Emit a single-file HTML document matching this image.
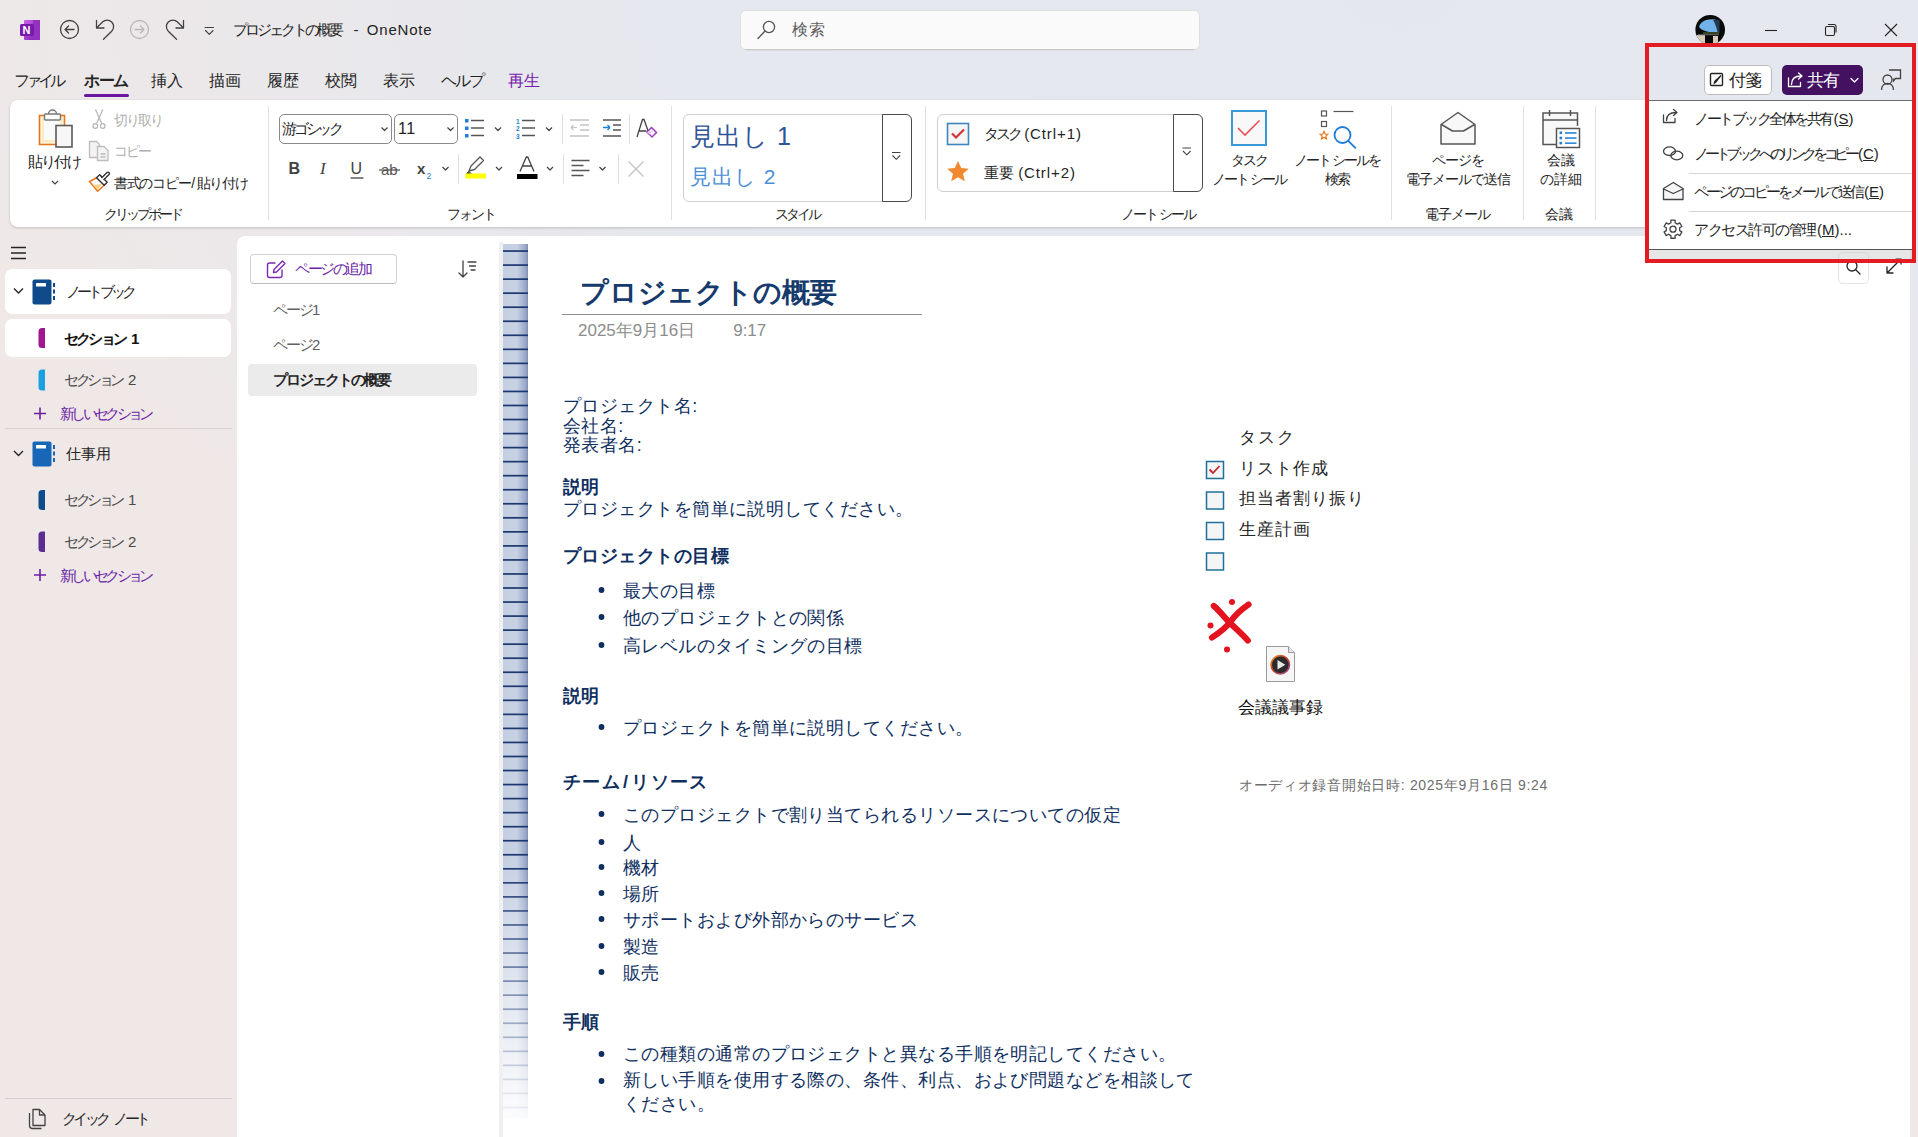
<!DOCTYPE html>
<html><head><meta charset="utf-8">
<style>
*{box-sizing:border-box;margin:0;padding:0}
html,body{width:1918px;height:1137px;overflow:hidden}
body{font-family:"Liberation Sans",sans-serif;position:relative;background:radial-gradient(ellipse 1500px 760px at 1400px 0px,#e4e8ee 0%,#e5e8ee 50%,rgba(232,232,236,.6) 78%,rgba(239,232,231,0) 100%),#efe8e7;color:#242424}
.a{position:absolute;white-space:nowrap}
svg{position:absolute;overflow:visible}
/* ribbon */
#ribbon{position:absolute;left:10px;top:100px;width:1660px;height:127px;background:#fff;border-radius:8px;box-shadow:0 1px 3px rgba(0,0,0,.18)}
.vsep{position:absolute;width:1px;background:#e1dfdd}
.glabel{position:absolute;font-size:14px;color:#3b3b3b;top:205px;transform:translateX(-50%)}
/* nav */
#nav{position:absolute;left:0;top:236px;width:237px;height:901px}
.card{position:absolute;left:5px;width:226px;background:#fff;border-radius:7px}
#pages{position:absolute;left:237px;top:236px;width:263px;height:901px;background:#fff;border-top-left-radius:8px}
#page{position:absolute;left:500px;top:236px;width:1410px;height:901px;background:#fff}
.t{color:#1c3160}
</style></head><body>


<!-- TITLE BAR -->
<svg style="left:0;top:0" width="1918" height="100">
 <!-- onenote logo -->
 <defs><linearGradient id="onb" x1="0" y1="0" x2="1" y2="1"><stop offset="0" stop-color="#ca64ea"/><stop offset="1" stop-color="#7719aa"/></linearGradient></defs>
 <rect x="24" y="20" width="16" height="20" rx="1" fill="url(#onb)"/>
 <rect x="33" y="20" width="7" height="20" fill="#9332bf"/>
 <rect x="20" y="24" width="14" height="12" rx="1.5" fill="#7719aa"/>
 <text x="22.5" y="34" font-family="Liberation Sans" font-weight="bold" font-size="11" fill="#fff">N</text>
 <!-- back -->
 <g fill="none" stroke="#424242" stroke-width="1.3" stroke-linecap="round" stroke-linejoin="round">
  <circle cx="69.5" cy="29.5" r="9"/>
  <path d="M65 29.5h9M65 29.5l3.5-3.5M65 29.5l3.5 3.5"/>
  <path d="M96.5 20.5v7.5h7.5M97 27.5L102.5 22A6.5 6.5 0 0 1 111.7 31.2L103.5 39.2"/>
 </g>
 <g fill="none" stroke="#b8b8b8" stroke-width="1.3" stroke-linecap="round" stroke-linejoin="round">
  <circle cx="139.5" cy="29.5" r="9"/>
  <path d="M144 29.5h-9M144 29.5l-3.5-3.5M144 29.5l-3.5 3.5"/>
 </g>
 <g fill="none" stroke="#424242" stroke-width="1.3" stroke-linecap="round" stroke-linejoin="round">
  <path d="M183.5 20.5v7.5h-7.5M183 27.5L177.5 22A6.5 6.5 0 0 0 168.3 31.2L176.5 39.2"/>
 </g>
 <g fill="none" stroke="#424242" stroke-width="1.1" stroke-linecap="round" stroke-linejoin="round">
  <path d="M205 27.5h8.5M205.5 30.5l3.8 3.8 3.8-3.8"/>
 </g>
 <!-- search box -->
 <rect x="740.5" y="10.5" width="459" height="39" rx="5" fill="#fafafa" stroke="#dedede"/>
 <line x1="745" y1="49.5" x2="1195" y2="49.5" stroke="#c8c8c8"/><line x1="747" y1="50.5" x2="1193" y2="50.5" stroke="#dcdde2"/>
 <g fill="none" stroke="#555" stroke-width="1.3" stroke-linecap="round">
  <circle cx="769" cy="27" r="5.6"/><path d="M765 31l-7 7.5"/>
 </g>
 <!-- avatar -->
 <defs><clipPath id="avc"><circle cx="1710.2" cy="29.7" r="14.8"/></clipPath></defs>
 <g clip-path="url(#avc)">
  <rect x="1695" y="14" width="31" height="31" fill="#0a0a0a"/>
  <path d="M1699 27c1-4 4-6 7-7 4-1 8-1 11 0l1 12h-9c-4-1-8-2-10-5z" fill="#6fb3ea"/>
  <path d="M1713 20c2 3 3 6 4 10l1 3h1.5v-13z" fill="#243a52"/>
  <path d="M1703 32h16v2h-16z" fill="#4a5a2a" opacity=".7"/>
  <path d="M1697 35h8v9h-8zM1713 36h5v8h-5z" fill="#d8ccb8"/>
  <path d="M1698 34h21v1.2h-21z" fill="#555"/>
 </g>
 <!-- window controls -->
 <g fill="none" stroke="#242424" stroke-width="1.1">
  <path d="M1765 30.5h12"/>
  <rect x="1825.5" y="26.5" width="9" height="9" rx="1.5"/>
  <path d="M1828 24.5h6a2 2 0 0 1 2 2v6"/>
  <path d="M1885 24l12 12M1897 24l-12 12"/>
 </g>
 <!-- active tab underline -->
 <rect x="84" y="94" width="45" height="3" rx="1.5" fill="#6b17a0"/>
</svg>
<div class="a" style="left:233px;top:20px;font-size:15px;line-height:20px;color:#242424"><span style="letter-spacing:-3px">プロジェクトの概要</span>&nbsp;&nbsp; - &nbsp;<span style="letter-spacing:0.8px">OneNote</span></div>
<div class="a tabs" style="top:70px;font-size:16px;line-height:22px;color:#242424">
 <span style="position:absolute;left:14px;letter-spacing:-4px">ファイル</span>
 <span style="position:absolute;left:84px;font-weight:bold;letter-spacing:-1.5px">ホーム</span>
 <span style="position:absolute;left:151px">挿入</span>
 <span style="position:absolute;left:209px">描画</span>
 <span style="position:absolute;left:267px">履歴</span>
 <span style="position:absolute;left:325px">校閲</span>
 <span style="position:absolute;left:383px">表示</span>
 <span style="position:absolute;left:441px;letter-spacing:-2px">ヘルプ</span>
 <span style="position:absolute;left:508px;color:#7719aa">再生</span>
</div>
<div class="a" style="left:792px;top:19px;font-size:16px;line-height:22px;color:#5e5e5e;letter-spacing:0.5px">検索</div>


<!-- RIBBON -->
<div id="ribbon"></div>
<svg style="left:0;top:0" width="1918" height="240">
 <!-- separators -->
 <g stroke="#e0e0e0" stroke-width="1">
  <path d="M268.5 106v114M671.5 106v114M925.5 106v114M1391.5 106v114M1523.5 106v114M1595.5 106v114"/>
  <path d="M562.5 114v30M629.5 114v30M458.5 154v30M563.5 154v30M618.5 154v30"/>
 </g>
 <!-- paste -->
 <rect x="39.5" y="115.5" width="25" height="29" fill="#fff6e0" stroke="#e8761c" stroke-width="1.6"/><rect x="42" y="118" width="20" height="24" fill="#fde2a8" opacity=".6"/><rect x="44" y="120" width="16" height="20" fill="#fafafa"/>
 <rect x="44.5" y="114" width="16" height="6" rx="1" fill="#fff" stroke="#7a7a7a" stroke-width="1.5"/>
 <path d="M48.5 114a4 4 0 0 1 8 0" fill="none" stroke="#7a7a7a" stroke-width="1.5"/>
 <rect x="56" y="125.5" width="16" height="21.5" fill="#f6f6f6" stroke="#5a5a5a" stroke-width="1.6"/>
 <path d="M52 181l3 3 3-3" fill="none" stroke="#424242" stroke-width="1.2"/>
 <!-- scissors -->
 <g fill="none" stroke="#b4b4b4" stroke-width="1.2">
  <path d="M95.5 109.5l6 13.5M102.8 109.5l-6 13.5"/>
  <circle cx="95.3" cy="126" r="2.3"/><circle cx="102.7" cy="126" r="2.3"/>
 </g>
 <!-- copy -->
 <g fill="#f3f3f3" stroke="#bcbcbc" stroke-width="1.3">
  <path d="M89.5 141.5h7l3 3v13h-10z"/>
  <path d="M97.5 146.5h6.5l4 4v10h-10.5z"/>
  <path d="M100.5 154h5M100.5 157h5" fill="none"/>
 </g>
 <!-- format painter -->
 <path d="M89.5 181.5l7.5-4 7.5 7.5-6.8 6.3z" fill="#fafafa" stroke="#e8761c" stroke-width="1.5" stroke-linejoin="round"/>
 <path d="M93 185l9-1-4.3 6z" fill="#fbd38a"/>
 <path d="M96.5 177.8l3.2-3 7.5 7.5-3 3z" fill="#fff" stroke="#303030" stroke-width="1.4" stroke-linejoin="round"/>
 <path d="M101.5 178l5.5-5.5a1.3 1.3 0 0 1 2 2l-5.5 5.5" fill="#fff" stroke="#303030" stroke-width="1.4" stroke-linejoin="round"/>
 <!-- font boxes -->
 <rect x="279.5" y="114.5" width="112" height="29" rx="4.5" fill="#fff" stroke="#8a8a8a"/>
 <rect x="394.5" y="114.5" width="63" height="29" rx="4.5" fill="#fff" stroke="#8a8a8a"/>
 <g fill="none" stroke="#424242" stroke-width="1.2" stroke-linejoin="round">
  <path d="M381.5 127.5l3 3 3-3M447.5 127.5l3 3 3-3M495 127.5l3 3 3-3M546 127.5l3 3 3-3"/>
  <path d="M442.5 167l3 3 3-3M496 167l3 3 3-3M547 167l3 3 3-3M599.5 167l3 3 3-3"/>
 </g>
 <!-- bullets -->
 <g fill="#1c7ed6"><rect x="465" y="119" width="3.5" height="3.5"/><rect x="465" y="126.5" width="3.5" height="3.5"/><rect x="465" y="134" width="3.5" height="3.5"/></g>
 <path d="M471 120.5h13M471 128h13M471 135.5h13M522 120.5h13M522 128h13M522 135.5h13" stroke="#555" stroke-width="1.4"/>
 <g fill="#1c7ed6" font-family="Liberation Sans" font-size="6.5" font-weight="bold"><text x="516" y="124">1</text><text x="516" y="131">2</text><text x="516" y="138.5">3</text></g>
 <!-- indents -->
 <path d="M570 120h19M580 125h9M580 130h9M570 136h19" stroke="#c4c4c4" stroke-width="1.4"/>
 <path d="M571 127.5h6M571 127.5l2.5-2.5M571 127.5l2.5 2.5" stroke="#c4c4c4" stroke-width="1.2" fill="none"/>
 <path d="M603 120h18M613 125h8M613 130h8M603 136h18" stroke="#555" stroke-width="1.4"/>
 <path d="M603 127.5h7M610 127.5l-2.5-2.5M610 127.5l-2.5 2.5" stroke="#1c7ed6" stroke-width="1.3" fill="none"/>
 <!-- clear formatting -->
 <path d="M637 137l5.5-17.5h1.5l5 14M639.5 131h7" fill="none" stroke="#424242" stroke-width="1.3"/>
 <path d="M647 132l4.5-4.5 5 5-4.5 4.5z" fill="#fff" stroke="#9b3fbf" stroke-width="1.5"/>
 <path d="M647 132l2.5 2.5 4.5-4.5" fill="#e9c8f5"/>
 <!-- B I U ab x2 -->
 <text x="288.5" y="174" font-family="Liberation Sans" font-weight="bold" font-size="16" fill="#424242">B</text>
 <text x="320" y="174" font-family="Liberation Serif" font-style="italic" font-size="17" fill="#424242">I</text>
 <text x="350.5" y="174" font-family="Liberation Sans" font-size="16" fill="#424242">U</text>
 <path d="M350.5 178h13" stroke="#424242" stroke-width="1.3"/>
 <text x="381" y="175" font-family="Liberation Sans" font-size="15" fill="#555">ab</text>
 <path d="M379 170h21" stroke="#555" stroke-width="1.3"/>
 <text x="417" y="174" font-family="Liberation Sans" font-weight="bold" font-size="15" fill="#424242">x</text>
 <text x="426.5" y="179" font-family="Liberation Sans" font-size="8.5" fill="#1c7ed6">2</text>
 <!-- highlighter -->
 <path d="M469 171l2-5 9-9 3.5 3.5-9 9z" fill="#fff" stroke="#555" stroke-width="1.3" stroke-linejoin="round"/>
 <path d="M469 171l-2.5 2.5h5" fill="#555" stroke="#555"/>
 <rect x="465.5" y="173.5" width="20.5" height="5" fill="#ffff00"/>
 <!-- font color -->
 <path d="M520 171.5l6.3-14.5h1.4l6.3 14.5M522.5 166h9" fill="none" stroke="#424242" stroke-width="1.3"/>
 <rect x="517" y="174" width="20.5" height="5" fill="#000"/>
 <!-- align -->
 <path d="M571.5 160.5h18M571.5 165.5h12M571.5 170.5h18M571.5 175.5h12" stroke="#555" stroke-width="1.4"/>
 <!-- X -->
 <path d="M628.5 161.5l15 15M643.5 161.5l-15 15" stroke="#c4c4c4" stroke-width="1.4"/>
 <!-- styles gallery -->
 <rect x="683.5" y="114.5" width="228" height="87" rx="5.5" fill="#fff" stroke="#cfcfcf"/>
 <path d="M882.5 114.5h23.5a5.5 5.5 0 0 1 5.5 5.5v76a5.5 5.5 0 0 1-5.5 5.5h-23.5z" fill="#fff" stroke="#4a4a4a"/>
 <path d="M892 152.5h8.5M892.5 155.5l3.8 3.8 3.8-3.8" fill="none" stroke="#424242" stroke-width="1.1"/>
 <!-- tags gallery -->
 <rect x="937.5" y="114.5" width="265" height="77" rx="5.5" fill="#fff" stroke="#cfcfcf"/>
 <path d="M1173.5 114.5h23.5a5.5 5.5 0 0 1 5.5 5.5v66a5.5 5.5 0 0 1-5.5 5.5h-23.5z" fill="#fff" stroke="#4a4a4a"/>
 <path d="M1182.5 148h8.5M1183 151l3.8 3.8 3.8-3.8" fill="none" stroke="#424242" stroke-width="1.1"/>
 <rect x="947.5" y="123.5" width="21" height="21" fill="#f5f5f5" stroke="#3e86c0" stroke-width="1.6"/>
 <path d="M952 133.5l4 4 8-8" fill="none" stroke="#d13438" stroke-width="2.2"/>
 <path d="M958 161l3.2 7 7.6.7-5.8 5 1.8 7.5-6.8-4-6.8 4 1.8-7.5-5.8-5 7.6-.7z" fill="#f0892e"/>
 <!-- big task -->
 <rect x="1232" y="111" width="34" height="34" fill="#f8f8f8" stroke="#3a9ad9" stroke-width="2"/>
 <path d="M1238 128l7 7 14.5-14.5" fill="none" stroke="#e8505b" stroke-width="1.6"/>
 <!-- find tags -->
 <g fill="none" stroke="#555" stroke-width="1.2">
  <rect x="1321.5" y="111" width="5" height="5"/><rect x="1321.5" y="121.5" width="5" height="5"/>
  <path d="M1333.5 111.5h20"/>
 </g>
 <path d="M1324 131.5l1.2 2.5 2.7.3-2 1.8.6 2.7-2.5-1.4-2.5 1.4.6-2.7-2-1.8 2.7-.3z" fill="none" stroke="#e8761c" stroke-width="1.2"/>
 <circle cx="1342.5" cy="135" r="8" fill="none" stroke="#1c7ed6" stroke-width="1.8"/>
 <path d="M1348.3 140.8l7.5 7.5" stroke="#1c7ed6" stroke-width="1.9"/>
 <!-- envelope -->
 <path d="M1441 124.5v19.5h34v-19.5l-17-12z" fill="#f8f8f8" stroke="#555" stroke-width="1.5" stroke-linejoin="round"/>
 <path d="M1441.5 124.5l11 6.5h11l11-6.5" fill="none" stroke="#555" stroke-width="1.5" stroke-linejoin="round"/>
 <!-- meeting -->
 <g fill="none" stroke="#555" stroke-width="1.5">
  <path d="M1556 144.5h-13v-31.5h34.5v13" fill="#f8f8f8"/>
  <path d="M1543 120h34.5M1549.5 110v6M1570.5 110v6"/>
 </g>
 <rect x="1556.5" y="128.5" width="23" height="19" fill="#fff" stroke="#555" stroke-width="1.5"/>
 <g fill="#1c7ed6"><rect x="1559.5" y="131.5" width="2.6" height="2.6"/><rect x="1559.5" y="136.7" width="2.6" height="2.6"/><rect x="1559.5" y="141.8" width="2.6" height="2.6"/>
 <rect x="1565" y="132.2" width="11.5" height="1.5"/><rect x="1565" y="137.3" width="11.5" height="1.5"/><rect x="1565" y="142.4" width="11.5" height="1.5"/></g>
</svg>
<div style="position:absolute;left:0;top:0;font-size:14px;line-height:18px;color:#242424">
 <div class="a" style="left:28px;top:153px;font-size:15px;letter-spacing:-2px">貼り付け</div>
 <div class="a" style="left:114px;top:111px;color:#b0b0b0;letter-spacing:-2px">切り取り</div>
 <div class="a" style="left:114px;top:142px;color:#b0b0b0;letter-spacing:-2px">コピー</div>
 <div class="a" style="left:114px;top:174px;letter-spacing:-1.3px">書式のコピー<span style="letter-spacing:1.5px;margin-left:1px">/</span>貼り付け</div>
 <div class="a" style="left:104px;top:205px;letter-spacing:-3px">クリップボード</div>
 <div class="a" style="left:282px;top:120px;font-size:15px;letter-spacing:-3.2px">游ゴシック</div>
 <div class="a" style="left:398px;top:120px;font-size:16px;letter-spacing:0.5px">11</div>
 <div class="a" style="left:447px;top:205px;letter-spacing:-2px">フォント</div>
 <div class="a" style="left:690px;top:121px;font-size:25px;line-height:30px;color:#2f5597;letter-spacing:1px">見出し 1</div>
 <div class="a" style="left:690px;top:164px;font-size:21px;line-height:26px;color:#4a8fd6;letter-spacing:1px">見出し 2</div>
 <div class="a" style="left:775px;top:205px;letter-spacing:-3px">スタイル</div>
 <div class="a" style="left:984px;top:125px;font-size:15px"><span style="letter-spacing:-3px">タスク</span> <span style="letter-spacing:0.9px">(Ctrl+1)</span></div>
 <div class="a" style="left:984px;top:164px;font-size:15px">重要 <span style="letter-spacing:0.9px">(Ctrl+2)</span></div>
 <div class="a" style="left:1212px;top:150.5px;line-height:19.5px;width:74px;text-align:center;letter-spacing:-2px">タスク<br>ノート シール</div>
 <div class="a" style="left:1294px;top:150.5px;line-height:19.5px;width:85px;text-align:center;letter-spacing:-2px">ノート シールを<br>検索</div>
 <div class="a" style="left:1121px;top:205px;letter-spacing:-2px">ノート シール</div>
 <div class="a" style="left:1402px;top:150.5px;line-height:19.5px;width:112px;text-align:center;letter-spacing:-1px">ページを<br>電子メールで送信</div>
 <div class="a" style="left:1425px;top:205px;letter-spacing:-1px">電子メール</div>
 <div class="a" style="left:1535px;top:150.5px;line-height:19.5px;width:52px;text-align:center;letter-spacing:0px">会議<br>の詳細</div>
 <div class="a" style="left:1545px;top:205px">会議</div>
</div>

<!-- NAV -->
<div id="nav"></div>
<svg style="left:0;top:236px" width="237" height="901">
 <path d="M11 11.5h15M11 17h15M11 22.5h15" stroke="#242424" stroke-width="1.5"/>
</svg>
<div class="card" style="top:269px;height:45px"></div>
<div class="card" style="top:319px;height:38px"></div>
<div style="position:absolute;left:5px;top:428px;width:227px;height:1px;background:#d6d0cf"></div>
<div style="position:absolute;left:5px;top:1098px;width:227px;height:1px;background:#cfcfd4"></div>
<svg style="left:0;top:0" width="240" height="1137">
 <g fill="none" stroke="#242424" stroke-width="1.4" stroke-linejoin="round">
  <path d="M14 288.5l4.5 4.5 4.5-4.5M14 451l4.5 4.5 4.5-4.5"/>
 </g>
 <!-- notebook icons -->
 <rect x="32.5" y="279.5" width="19" height="25" rx="2" fill="#0f4a8a"/>
 <rect x="36" y="283" width="10" height="3.5" rx=".5" fill="#fff"/>
 <g fill="#0f4a8a"><rect x="53" y="283" width="2" height="4"/><rect x="53" y="289.5" width="2" height="4"/><rect x="53" y="296" width="2" height="4"/></g>
 <rect x="32.5" y="441.5" width="19" height="25" rx="2" fill="#1766b8"/>
 <rect x="36" y="445" width="10" height="3.5" rx=".5" fill="#fff"/>
 <g fill="#1766b8"><rect x="53" y="445" width="2" height="4"/><rect x="53" y="451.5" width="2" height="4"/><rect x="53" y="458" width="2" height="4"/></g>
 <!-- section tabs -->
 <path d="M45 328v20h-3a3.5 3.5 0 0 1-3.5-3.5v-13a3.5 3.5 0 0 1 3.5-3.5z" fill="#a0178f"/>
 <path d="M45 369.5v21h-3a3.5 3.5 0 0 1-3.5-3.5v-14a3.5 3.5 0 0 1 3.5-3.5z" fill="#1ba1e2"/>
 <path d="M45 490v20h-3a3.5 3.5 0 0 1-3.5-3.5v-13a3.5 3.5 0 0 1 3.5-3.5z" fill="#0e4c8c"/>
 <path d="M45 531.5v20.5h-3a3.5 3.5 0 0 1-3.5-3.5v-13.5a3.5 3.5 0 0 1 3.5-3.5z" fill="#5c2d91"/>
 <path d="M34 413.5h12M40 407.5v12M34 575h12M40 569v12" stroke="#6b1fa6" stroke-width="1.6"/>
 <!-- quick notes icon -->
 <g fill="none" stroke="#424242" stroke-width="1.3" stroke-linejoin="round">
  <path d="M29.5 1113v12.5a3 3 0 0 0 3 3h9"/>
  <path d="M33 1109.5h6.5l5.5 5.5v10.5h-12z"/>
  <path d="M39.5 1109.5v5.5h5.5"/>
 </g>
</svg>
<div style="position:absolute;left:0;top:0;font-size:15px;line-height:20px;color:#242424">
 <div class="a" style="left:66px;top:282px;letter-spacing:-3.8px">ノートブック</div>
 <div class="a" style="left:64px;top:329px;font-weight:bold;color:#111"><span style="letter-spacing:-2.8px">セクション</span><span style="margin-left:6px">1</span></div>
 <div class="a" style="left:64px;top:370px;color:#4a4a4a"><span style="letter-spacing:-3.4px">セクション</span><span style="margin-left:6px">2</span></div>
 <div class="a" style="left:60px;top:404px;color:#6b1fa6;letter-spacing:-3.7px">新しいセクション</div>
 <div class="a" style="left:66px;top:444px;letter-spacing:0px">仕事用</div>
 <div class="a" style="left:64px;top:490px;color:#4a4a4a"><span style="letter-spacing:-3.4px">セクション</span><span style="margin-left:6px">1</span></div>
 <div class="a" style="left:64px;top:532px;color:#4a4a4a"><span style="letter-spacing:-3.4px">セクション</span><span style="margin-left:6px">2</span></div>
 <div class="a" style="left:60px;top:566px;color:#6b1fa6;letter-spacing:-3.7px">新しいセクション</div>
 <div class="a" style="left:62px;top:1109px"><span style="letter-spacing:-3.7px">クイック</span><span style="margin-left:6px;letter-spacing:-3.7px">ノート</span></div>
</div>
<div id="pages"></div>
<div style="position:absolute;left:250px;top:254px;width:147px;height:30px;border:1px solid #d1d1d1;border-bottom-color:#bdbdbd;border-radius:4px;background:#fff"></div>
<div style="position:absolute;left:248px;top:364px;width:229px;height:32px;border-radius:4px;background:#ebebeb"></div>
<svg style="left:0;top:0" width="500" height="400">
 <g fill="none" stroke="#7a2bb0" stroke-width="1.4" stroke-linejoin="round" stroke-linecap="round">
  <path d="M275 263h-5.5a2 2 0 0 0-2 2v10.5a2 2 0 0 0 2 2h10.5a2 2 0 0 0 2-2v-5.5"/>
  <path d="M273.5 272.5l.5-3 8.5-8.5 2.5 2.5-8.5 8.5z"/>
 </g>
 <g fill="none" stroke="#424242" stroke-width="1.3" stroke-linecap="round" stroke-linejoin="round">
  <path d="M463 261v16M459 273l4 4 4-4M468 262h8M469.5 266h6M471 270h4"/>
 </g>
</svg>
<div style="position:absolute;left:0;top:0;font-size:15px;line-height:20px;color:#616161">
 <div class="a" style="left:295px;top:259px;color:#6b1fa6;letter-spacing:-2.5px">ページの追加</div>
 <div class="a" style="left:273px;top:300px;letter-spacing:-2px">ページ1</div>
 <div class="a" style="left:273px;top:335px;letter-spacing:-2px">ページ2</div>
 <div class="a" style="left:273px;top:370px;font-weight:bold;color:#242424;letter-spacing:-2px">プロジェクトの概要</div>
</div>
<div id="page"></div>
<div style="position:absolute;left:499px;top:242px;width:4px;height:895px;background:#f0f0f0"></div>
<div style="position:absolute;left:503px;top:244px;width:25px;height:874px;background:linear-gradient(180deg,rgba(255,255,255,0) 0%,rgba(255,255,255,0) 70%,rgba(255,255,255,.95) 100%),linear-gradient(90deg,#c3cee2 0%,#c8d2e4 55%,#9aa8c8 90%,#7f8fb5 100%)"></div>
<svg style="left:0;top:0" width="540" height="1137">
<rect x="503" y="250.20" width="25" height="1.7" fill="#1d3870" opacity="1.00"/>
<rect x="503" y="264.24" width="25" height="1.7" fill="#1d3870" opacity="1.00"/>
<rect x="503" y="278.28" width="25" height="1.7" fill="#1d3870" opacity="1.00"/>
<rect x="503" y="292.32" width="25" height="1.7" fill="#1d3870" opacity="1.00"/>
<rect x="503" y="306.36" width="25" height="1.7" fill="#1d3870" opacity="1.00"/>
<rect x="503" y="320.40" width="25" height="1.7" fill="#1d3870" opacity="1.00"/>
<rect x="503" y="334.44" width="25" height="1.7" fill="#1d3870" opacity="1.00"/>
<rect x="503" y="348.48" width="25" height="1.7" fill="#1d3870" opacity="1.00"/>
<rect x="503" y="362.52" width="25" height="1.7" fill="#1d3870" opacity="1.00"/>
<rect x="503" y="376.56" width="25" height="1.7" fill="#1d3870" opacity="1.00"/>
<rect x="503" y="390.60" width="25" height="1.7" fill="#1d3870" opacity="1.00"/>
<rect x="503" y="404.64" width="25" height="1.7" fill="#1d3870" opacity="1.00"/>
<rect x="503" y="418.68" width="25" height="1.7" fill="#1d3870" opacity="1.00"/>
<rect x="503" y="432.72" width="25" height="1.7" fill="#1d3870" opacity="1.00"/>
<rect x="503" y="446.76" width="25" height="1.7" fill="#1d3870" opacity="1.00"/>
<rect x="503" y="460.80" width="25" height="1.7" fill="#1d3870" opacity="1.00"/>
<rect x="503" y="474.84" width="25" height="1.7" fill="#1d3870" opacity="1.00"/>
<rect x="503" y="488.88" width="25" height="1.7" fill="#1d3870" opacity="1.00"/>
<rect x="503" y="502.92" width="25" height="1.7" fill="#1d3870" opacity="1.00"/>
<rect x="503" y="516.96" width="25" height="1.7" fill="#1d3870" opacity="1.00"/>
<rect x="503" y="531.00" width="25" height="1.7" fill="#1d3870" opacity="1.00"/>
<rect x="503" y="545.04" width="25" height="1.7" fill="#1d3870" opacity="1.00"/>
<rect x="503" y="559.08" width="25" height="1.7" fill="#1d3870" opacity="1.00"/>
<rect x="503" y="573.12" width="25" height="1.7" fill="#1d3870" opacity="1.00"/>
<rect x="503" y="587.16" width="25" height="1.7" fill="#1d3870" opacity="1.00"/>
<rect x="503" y="601.20" width="25" height="1.7" fill="#1d3870" opacity="1.00"/>
<rect x="503" y="615.24" width="25" height="1.7" fill="#1d3870" opacity="1.00"/>
<rect x="503" y="629.28" width="25" height="1.7" fill="#1d3870" opacity="1.00"/>
<rect x="503" y="643.32" width="25" height="1.7" fill="#1d3870" opacity="1.00"/>
<rect x="503" y="657.36" width="25" height="1.7" fill="#1d3870" opacity="1.00"/>
<rect x="503" y="671.40" width="25" height="1.7" fill="#1d3870" opacity="1.00"/>
<rect x="503" y="685.44" width="25" height="1.7" fill="#1d3870" opacity="1.00"/>
<rect x="503" y="699.48" width="25" height="1.7" fill="#1d3870" opacity="1.00"/>
<rect x="503" y="713.52" width="25" height="1.7" fill="#1d3870" opacity="1.00"/>
<rect x="503" y="727.56" width="25" height="1.7" fill="#1d3870" opacity="1.00"/>
<rect x="503" y="741.60" width="25" height="1.7" fill="#1d3870" opacity="1.00"/>
<rect x="503" y="755.64" width="25" height="1.7" fill="#1d3870" opacity="1.00"/>
<rect x="503" y="769.68" width="25" height="1.7" fill="#1d3870" opacity="1.00"/>
<rect x="503" y="783.72" width="25" height="1.7" fill="#1d3870" opacity="1.00"/>
<rect x="503" y="797.76" width="25" height="1.7" fill="#1d3870" opacity="1.00"/>
<rect x="503" y="811.80" width="25" height="1.7" fill="#1d3870" opacity="1.00"/>
<rect x="503" y="825.84" width="25" height="1.7" fill="#1d3870" opacity="1.00"/>
<rect x="503" y="839.88" width="25" height="1.7" fill="#1d3870" opacity="1.00"/>
<rect x="503" y="853.92" width="25" height="1.7" fill="#1d3870" opacity="1.00"/>
<rect x="503" y="867.96" width="25" height="1.7" fill="#1d3870" opacity="0.97"/>
<rect x="503" y="882.00" width="25" height="1.7" fill="#1d3870" opacity="0.91"/>
<rect x="503" y="896.04" width="25" height="1.7" fill="#1d3870" opacity="0.86"/>
<rect x="503" y="910.08" width="25" height="1.7" fill="#1d3870" opacity="0.80"/>
<rect x="503" y="924.12" width="25" height="1.7" fill="#1d3870" opacity="0.75"/>
<rect x="503" y="938.16" width="25" height="1.7" fill="#1d3870" opacity="0.70"/>
<rect x="503" y="952.20" width="25" height="1.7" fill="#1d3870" opacity="0.64"/>
<rect x="503" y="966.24" width="25" height="1.7" fill="#1d3870" opacity="0.59"/>
<rect x="503" y="980.28" width="25" height="1.7" fill="#1d3870" opacity="0.53"/>
<rect x="503" y="994.32" width="25" height="1.7" fill="#1d3870" opacity="0.48"/>
<rect x="503" y="1008.36" width="25" height="1.7" fill="#1d3870" opacity="0.43"/>
<rect x="503" y="1022.40" width="25" height="1.7" fill="#1d3870" opacity="0.37"/>
<rect x="503" y="1036.44" width="25" height="1.7" fill="#1d3870" opacity="0.32"/>
<rect x="503" y="1050.48" width="25" height="1.7" fill="#1d3870" opacity="0.26"/>
<rect x="503" y="1064.52" width="25" height="1.7" fill="#1d3870" opacity="0.21"/>
<rect x="503" y="1078.56" width="25" height="1.7" fill="#1d3870" opacity="0.16"/>
<rect x="503" y="1092.60" width="25" height="1.7" fill="#1d3870" opacity="0.10"/>
<rect x="503" y="1106.64" width="25" height="1.7" fill="#1d3870" opacity="0.08"/>
</svg>



<!-- PAGE CONTENT -->
<div style="position:absolute;left:562px;top:314px;width:360px;height:1px;background:#8f8f8f"></div>
<div class="a" style="left:580px;top:275px;font-size:28px;line-height:36px;font-weight:bold;color:#163a6c;letter-spacing:-0.2px">プロジェクトの概要</div>
<div class="a" style="left:578px;top:321px;font-size:17px;line-height:20px;color:#8c8c8c">2025年9月16日<span style="display:inline-block;width:38px"></span>9:17</div>
<div style="position:absolute;left:0;top:1px;font-size:18px;line-height:22px;color:#0f2f5f;letter-spacing:0.45px">
 <div class="a" style="left:563px;top:394px">プロジェクト名:</div>
 <div class="a" style="left:563px;top:414px">会社名:</div>
 <div class="a" style="left:563px;top:433px">発表者名:</div>
 <div class="a" style="left:563px;top:475px;font-weight:bold">説明</div>
 <div class="a" style="left:563px;top:497px">プロジェクトを簡単に説明してください。</div>
 <div class="a" style="left:563px;top:544px;font-weight:bold">プロジェクトの目標</div>
 <div class="a" style="left:623px;top:579px">最大の目標</div>
 <div class="a" style="left:623px;top:606px">他のプロジェクトとの関係</div>
 <div class="a" style="left:623px;top:634px">高レベルのタイミングの目標</div>
 <div class="a" style="left:563px;top:684px;font-weight:bold">説明</div>
 <div class="a" style="left:623px;top:716px">プロジェクトを簡単に説明してください。</div>
 <div class="a" style="left:563px;top:770px;font-weight:bold;letter-spacing:1.3px">チーム<span style="margin:0 2px">/</span>リソース</div>
 <div class="a" style="left:623px;top:803px">このプロジェクトで割り当てられるリソースについての仮定</div>
 <div class="a" style="left:623px;top:831px">人</div>
 <div class="a" style="left:623px;top:856px">機材</div>
 <div class="a" style="left:623px;top:882px">場所</div>
 <div class="a" style="left:623px;top:908px">サポートおよび外部からのサービス</div>
 <div class="a" style="left:623px;top:935px">製造</div>
 <div class="a" style="left:623px;top:961px">販売</div>
 <div class="a" style="left:563px;top:1010px;font-weight:bold">手順</div>
 <div class="a" style="left:623px;top:1042px">この種類の通常のプロジェクトと異なる手順を明記してください。</div>
 <div class="a" style="left:623px;top:1068px">新しい手順を使用する際の、条件、利点、および問題などを相談して</div>
 <div class="a" style="left:623px;top:1092px">ください。</div>
</div>
<svg style="left:0;top:0" width="1918" height="1137">
 <g fill="#0f2f5f">
  <circle cx="601.5" cy="590" r="2.9"/><circle cx="601.5" cy="617" r="2.9"/><circle cx="601.5" cy="645" r="2.9"/>
  <circle cx="601.5" cy="727" r="2.9"/>
  <circle cx="601.5" cy="814" r="2.9"/><circle cx="601.5" cy="842" r="2.9"/><circle cx="601.5" cy="867" r="2.9"/><circle cx="601.5" cy="893" r="2.9"/><circle cx="601.5" cy="919" r="2.9"/><circle cx="601.5" cy="946" r="2.9"/><circle cx="601.5" cy="972" r="2.9"/>
  <circle cx="601.5" cy="1054" r="2.9"/><circle cx="601.5" cy="1081" r="2.9"/>
 </g>
 <!-- checkboxes -->
 <g fill="#f5f5f5" stroke="#1f6f9a" stroke-width="1.5">
  <rect x="1206.5" y="461.5" width="17" height="17"/>
  <rect x="1206.5" y="492" width="17" height="17"/>
  <rect x="1206.5" y="522.5" width="17" height="17"/>
  <rect x="1206.5" y="553" width="17" height="17"/>
 </g>
 <path d="M1209.5 469.5l3.5 3.5 6.5-7" fill="none" stroke="#c4262e" stroke-width="1.8"/>
 <!-- red X drawing -->
 <g stroke="#e3131f" stroke-linecap="round" fill="none" stroke-width="6.2">
  <path d="M1213.8 606C1219 610 1223 616 1229 622S1242 634 1247.8 640.5"/>
  <path d="M1248.5 604.5C1242 609 1236 614 1231 621S1219 633 1212 637.5"/>
 </g>
 <g fill="#e3131f"><circle cx="1232" cy="602" r="3"/><circle cx="1210.5" cy="625.5" r="3"/><circle cx="1227" cy="649.5" r="3"/></g>
 <!-- audio file -->
 <path d="M1266.5 646.5h22l6 6v29h-28z" fill="#f6f6f6" stroke="#9a9a9a"/>
 <path d="M1288.5 646.5v6h6" fill="#e4e4e4" stroke="#9a9a9a"/>
 <defs><linearGradient id="ring" x1="0" y1="0" x2="1" y2="1"><stop offset="0" stop-color="#f7941d"/><stop offset=".5" stop-color="#c0392b"/><stop offset="1" stop-color="#9b59b6"/></linearGradient></defs>
 <circle cx="1280.3" cy="664.8" r="10" fill="url(#ring)"/>
 <circle cx="1280.3" cy="664.8" r="8.3" fill="#2b2b2b"/>
 <path d="M1277.5 660v9.6l7.8-4.8z" fill="#e8e8e8"/>
</svg>
<div style="position:absolute;left:0;top:0;font-size:17px;line-height:22px;color:#262626">
 <div class="a" style="left:1239px;top:427px;letter-spacing:2px">タスク</div>
 <div class="a" style="left:1239px;top:458px;letter-spacing:1px">リスト作成</div>
 <div class="a" style="left:1239px;top:488px;letter-spacing:1px">担当者割り振り</div>
 <div class="a" style="left:1239px;top:519px;letter-spacing:1px">生産計画</div>
 <div class="a" style="left:1238px;top:697px;color:#111">会議議事録</div>
 <div class="a" style="left:1239px;top:775px;font-size:14px;line-height:20px;color:#6e6e6e;letter-spacing:0.7px">オーディオ録音開始日時: 2025年9月16日 9:24</div>
</div>
<!-- page search & expand -->
<div style="position:absolute;left:1838px;top:252px;width:31px;height:32px;border:1px solid #e3e3e3;border-radius:5px;background:#fff"></div>
<svg style="left:0;top:0" width="1918" height="300">
 <g fill="none" stroke="#242424" stroke-width="1.3" stroke-linecap="round">
  <circle cx="1852" cy="266" r="5"/><path d="M1855.5 269.5l4.5 4.5"/>
  <path d="M1887 273l14-14M1887 273h6M1887 273v-6M1901 259h-5M1901 259v5"/>
 </g>
</svg>

<!-- RIGHT DROPDOWN -->
<div style="position:absolute;left:1649px;top:47px;width:263px;height:53px;background:#e4e7ed"></div>
<div style="position:absolute;left:1649px;top:100px;width:263px;height:150px;background:#fff;border-top:1px solid #6a6a6a;border-bottom:1.5px solid #555"></div>
<div style="position:absolute;left:1649px;top:250px;width:263px;height:9px;background:rgba(200,200,200,.45)"></div>
<div style="position:absolute;left:1689px;top:173px;width:223px;height:1px;background:#d6d6d6"></div>
<div style="position:absolute;left:1689px;top:211px;width:223px;height:1px;background:#d6d6d6"></div>
<div style="position:absolute;left:1645px;top:43px;width:271px;height:220px;border:4px solid #e31b23"></div>
<div style="position:absolute;left:1703.5px;top:65px;width:68px;height:30px;background:#fff;border:1px solid #bdbdbd;border-radius:5px"></div>
<div style="position:absolute;left:1782px;top:65px;width:81px;height:30px;background:#43115f;border-radius:5px"></div>
<svg style="left:0;top:0" width="1918" height="260">
 <rect x="1710.5" y="73.5" width="12" height="12" rx="1" fill="none" stroke="#242424" stroke-width="1.4"/>
 <path d="M1713.5 84.5c0-3 1.5-5 3.5-6l3.5-3.5 1 1-3 3.5c-1 2-3 4-5 5z" fill="#242424"/>
 <g fill="none" stroke="#fff" stroke-width="1.3" stroke-linejoin="round" stroke-linecap="round">
  <path d="M1788.5 78v8.5h12v-4"/>
  <path d="M1791.5 84.5c0-5.5 3.5-8.5 9.5-8.5M1798.5 73l3.5 3-3.5 3"/>
  <path d="M1851 78.5l3.5 3.5 3.5-3.5"/>
 </g>
 <g fill="none" stroke="#424242" stroke-width="1.3">
  <circle cx="1887.5" cy="79.5" r="4.5"/>
  <path d="M1881.5 90c0-4 2.5-6.5 6-6.5s6 2.5 6 6.5"/>
  <path d="M1889 70h11.5v8.5h-5l-2 2.5v-2.5"/>
 </g>
 <!-- menu icons -->
 <g fill="none" stroke="#424242" stroke-width="1.3" stroke-linejoin="round" stroke-linecap="round">
  <path d="M1663.5 115v7.5h11.5v-4"/>
  <path d="M1666.5 120.5c0-5 3.5-8 9.5-8M1673.5 109.5l3.5 3-3.5 3"/>
  <ellipse cx="1669.5" cy="151.2" rx="6" ry="4.3"/>
  <ellipse cx="1676.8" cy="155.5" rx="6" ry="4.3"/>
  <path d="M1663.5 188.5v11h19.5v-11l-9.75-6z" fill="#f6f6f6"/>
  <path d="M1663.5 189l9.75 4.5 9.75-4.5"/>
 </g>
 <g transform="translate(1673 229.2)" fill="none" stroke="#424242" stroke-width="1.3" stroke-linejoin="round">
  <path d="M-2.12 -9.05 L2.12 -9.05 L2.10 -6.47 L4.55 -5.05 L6.78 -6.37 L8.90 -2.69 L6.65 -1.41 L6.65 1.41 L8.90 2.69 L6.78 6.37 L4.55 5.05 L2.10 6.47 L2.12 9.05 L-2.12 9.05 L-2.10 6.47 L-4.55 5.05 L-6.78 6.37 L-8.90 2.69 L-6.65 1.41 L-6.65 -1.41 L-8.90 -2.69 L-6.78 -6.37 L-4.55 -5.05 L-2.10 -6.47Z"/>
  <circle cx="0" cy="0" r="3"/>
 </g>
</svg>
<div class="a" style="left:1729px;top:70px;font-size:17px;line-height:22px;color:#242424;letter-spacing:-1px">付箋</div>
<div class="a" style="left:1807px;top:70px;font-size:17px;line-height:22px;color:#fff;letter-spacing:-1px">共有</div>
<div style="position:absolute;left:1694px;top:0;font-size:15px;line-height:20px;color:#242424">
 <div class="a" style="left:0;top:109px"><span style="letter-spacing:-2.5px">ノートブック全体を共有</span><span style="margin-left:2px">(<u>S</u>)</span></div>
 <div class="a" style="left:0;top:144px"><span style="letter-spacing:-4.2px">ノートブックへのリンクをコピー</span><span style="margin-left:2px">(<u>C</u>)</span></div>
 <div class="a" style="left:0;top:182px"><span style="letter-spacing:-3px">ページのコピーをメールで送信</span><span style="margin-left:2px">(<u>E</u>)</span></div>
 <div class="a" style="left:0;top:220px"><span style="letter-spacing:-1.5px">アクセス許可の管理</span><span style="margin-left:1.5px">(<u>M</u>)...</span></div>
</div>

</body></html>
